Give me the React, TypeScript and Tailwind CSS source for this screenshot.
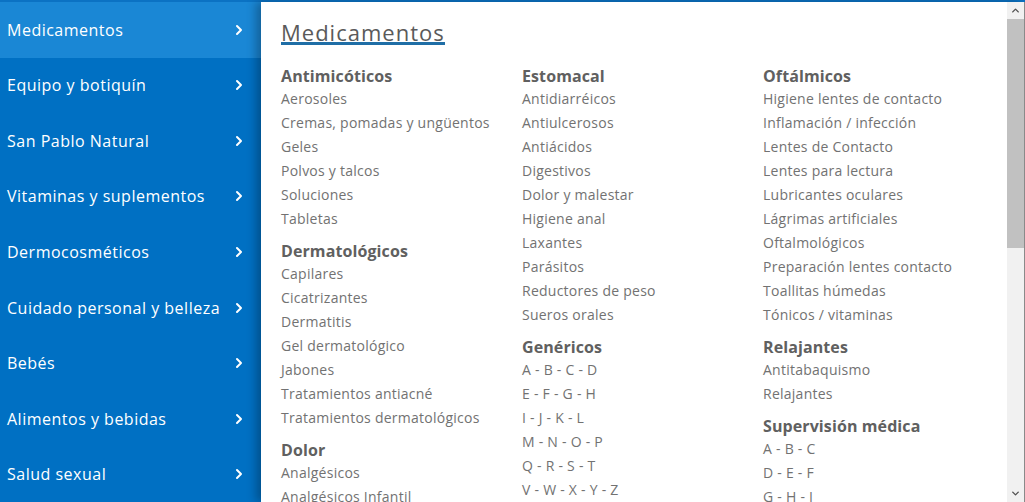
import { ChevronRight, ChevronUp, ChevronDown } from "lucide-react";

type Section = { title: string; items: string[] };

const menu = [
  "Medicamentos",
  "Equipo y botiquín",
  "San Pablo Natural",
  "Vitaminas y suplementos",
  "Dermocosméticos",
  "Cuidado personal y belleza",
  "Bebés",
  "Alimentos y bebidas",
  "Salud sexual",
];

const columns: Section[][] = [
  [
    {
      title: "Antimicóticos",
      items: ["Aerosoles", "Cremas, pomadas y ungüentos", "Geles", "Polvos y talcos", "Soluciones", "Tabletas"],
    },
    {
      title: "Dermatológicos",
      items: [
        "Capilares",
        "Cicatrizantes",
        "Dermatitis",
        "Gel dermatológico",
        "Jabones",
        "Tratamientos antiacné",
        "Tratamientos dermatológicos",
      ],
    },
    { title: "Dolor", items: ["Analgésicos", "Analgésicos Infantil"] },
  ],
  [
    {
      title: "Estomacal",
      items: [
        "Antidiarréicos",
        "Antiulcerosos",
        "Antiácidos",
        "Digestivos",
        "Dolor y malestar",
        "Higiene anal",
        "Laxantes",
        "Parásitos",
        "Reductores de peso",
        "Sueros orales",
      ],
    },
    {
      title: "Genéricos",
      items: ["A - B - C - D", "E - F - G - H", "I - J - K - L", "M - N - O - P", "Q - R - S - T", "V - W - X - Y - Z"],
    },
  ],
  [
    {
      title: "Oftálmicos",
      items: [
        "Higiene lentes de contacto",
        "Inflamación / infección",
        "Lentes de Contacto",
        "Lentes para lectura",
        "Lubricantes oculares",
        "Lágrimas artificiales",
        "Oftalmológicos",
        "Preparación lentes contacto",
        "Toallitas húmedas",
        "Tónicos / vitaminas",
      ],
    },
    { title: "Relajantes", items: ["Antitabaquismo", "Relajantes"] },
    { title: "Supervisión médica", items: ["A - B - C", "D - E - F", "G - H - I"] },
  ],
];

const App = () => {
  return (
    <div
      className="h-[502px] w-[1025px] overflow-hidden bg-[#0b72c3] pt-[2px] flex"
      style={{ fontFamily: '"Open Sans", "Liberation Sans", sans-serif' }}
    >
      {/* Sidebar */}
      <nav className="w-[261px] shrink-0 flex flex-col h-[500px] bg-[#0070c3]">
        {menu.map((label, i) => (
          <a
            key={label}
            href="#"
            className={`flex-1 flex items-center justify-between pl-[7px] pr-[14px] text-white text-[16px] tracking-[0.5px] ${
              i === 0 ? "bg-[#1a87d5]" : ""
            }`}
          >
            <span>{label}</span>
            <ChevronRight size={16} strokeWidth={3} />
          </a>
        ))}
      </nav>

      {/* Panel */}
      <div className="relative z-10 flex-1 flex bg-white h-[500px] shadow-[-5px_0_9px_rgba(0,0,0,0.28)] border-r border-[#8a8a8a]">
        <div className="flex-1 pl-[20px] pt-[20px] overflow-hidden">
          <h2 className="inline-block text-[22px] leading-[20px] text-[#5a5a5a] border-b-[3px] border-[#1f6ea6] tracking-[1px]">
            Medicamentos
          </h2>
          <div className="mt-[18px] grid grid-cols-[241px_241px_241px]">
            {columns.map((col, ci) => (
              <div key={ci}>
                {col.map((sec, si) => (
                  <div key={sec.title} className={si > 0 ? "mt-[9px]" : ""}>
                    <h3 className="text-[16px] leading-[22px] font-bold text-[#606060] tracking-[0.1px]">
                      {sec.title}
                    </h3>
                    <ul>
                      {sec.items.map((it) => (
                        <li key={it} className="text-[14px] leading-[24px] text-[#727272] tracking-[0.25px]">
                          {it}
                        </li>
                      ))}
                    </ul>
                  </div>
                ))}
              </div>
            ))}
          </div>
        </div>

        {/* Scrollbar */}
        <div className="w-[17px] shrink-0 bg-[#f1f1f1] flex flex-col">
          <div className="h-[17px] flex items-center justify-center text-[#505050]">
            <ChevronUp size={11} strokeWidth={3} />
          </div>
          <div className="h-[229px] bg-[#c1c1c1]" />
          <div className="flex-1" />
          <div className="h-[17px] flex items-center justify-center text-[#505050]">
            <ChevronDown size={11} strokeWidth={3} />
          </div>
        </div>
      </div>
    </div>
  );
};

export default App;
